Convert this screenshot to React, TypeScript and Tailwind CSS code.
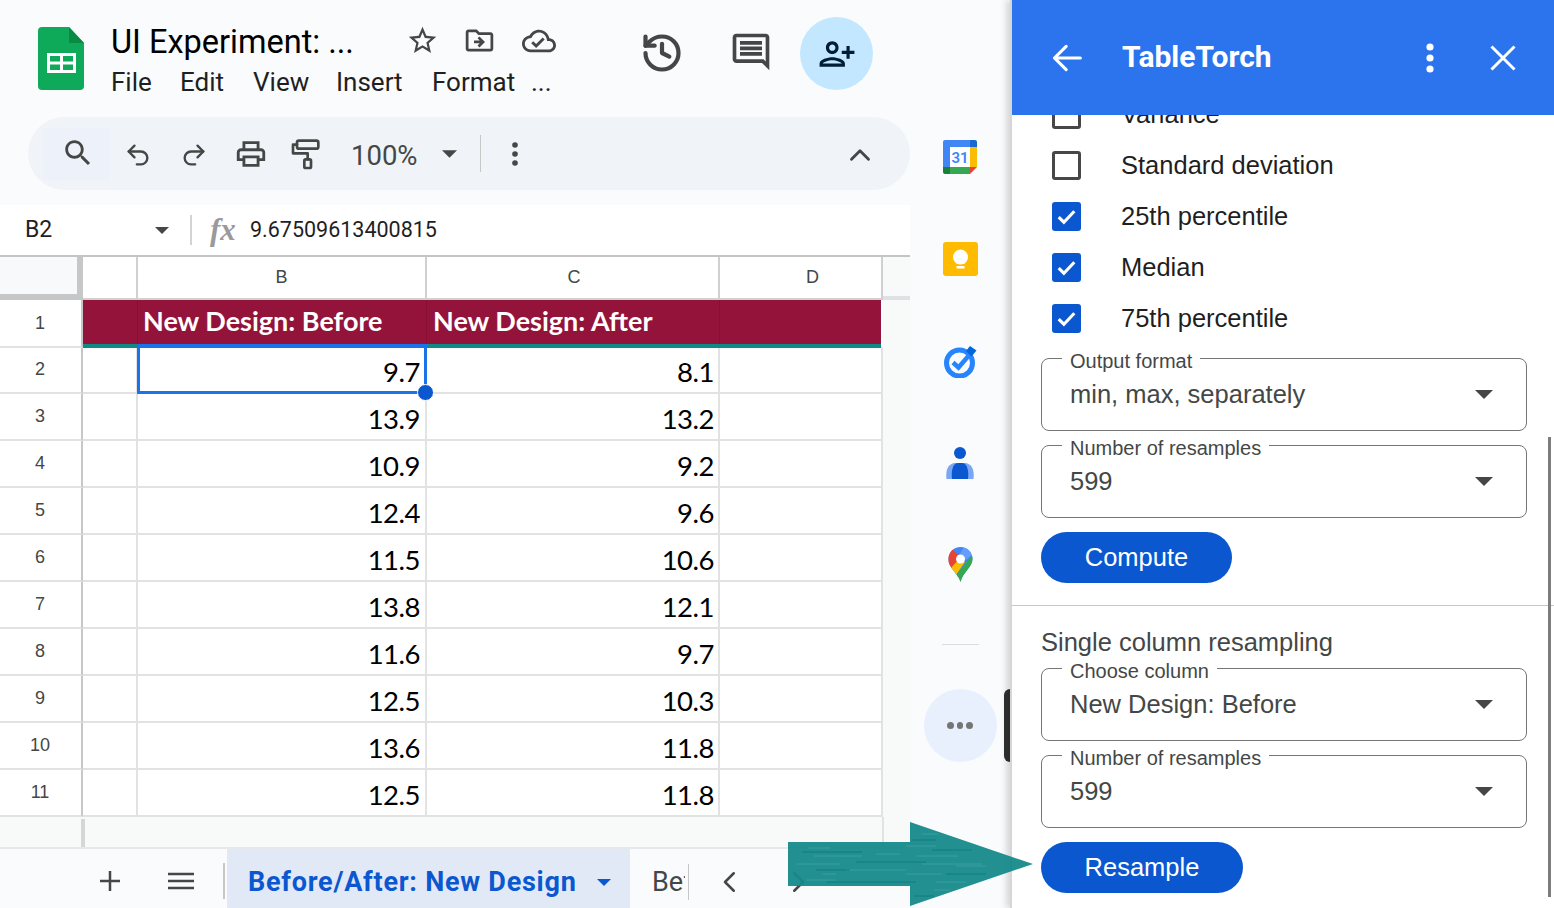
import React from "react";

const P = {
  star: "M22 9.24l-7.19-.62L12 2 9.19 8.63 2 9.24l5.46 4.73L5.82 21 12 17.27 18.18 21l-1.63-7.03L22 9.24zM12 15.4l-3.76 2.27 1-4.28-3.32-2.88 4.38-.38L12 6.1l1.71 4.04 4.38.38-3.32 2.88 1 4.28L12 15.4z",
  move: "M20 6h-8l-2-2H4c-1.11 0-1.99.89-1.99 2L2 18c0 1.11.89 2 2 2h16c1.11 0 2-.89 2-2V8c0-1.11-.89-2-2-2zm0 12H4V6h5.17l2 2H20v10zm-8.01-9l-1.41 1.41L12.16 12H8v2h4.16l-1.59 1.59L11.99 17 16 13.01 11.99 9z",
  cloud: "M19.35 10.04C18.67 6.59 15.64 4 12 4 9.11 4 6.6 5.64 5.35 8.04 2.34 8.36 0 10.91 0 14c0 3.31 2.69 6 6 6h13c2.76 0 5-2.24 5-5 0-2.64-2.05-4.78-4.65-4.96zM19 18H6c-2.21 0-4-1.79-4-4 0-2.05 1.53-3.76 3.56-3.97l1.07-.11.5-.95C8.08 7.14 9.94 6 12 6c2.62 0 4.88 1.86 5.39 4.43l.3 1.5 1.53.11c1.56.1 2.78 1.41 2.78 2.96 0 1.65-1.35 3-3 3zm-9-3.82l-2.09-2.09L6.5 13.5 10 17l6.01-6.01-1.41-1.41z",
  search: "M15.5 14h-.79l-.28-.27C15.41 12.59 16 11.11 16 9.5 16 5.91 13.09 3 9.5 3S3 5.91 3 9.5 5.91 16 9.5 16c1.61 0 3.09-.59 4.23-1.57l.27.28v.79l5 4.99L20.49 19l-4.99-5zm-6 0C7.01 14 5 11.99 5 9.5S7.01 5 9.5 5 14 7.01 14 9.5 11.99 14 9.5 14z",
  print: "M19 8h-1V3H6v5H5c-1.66 0-3 1.34-3 3v6h4v4h12v-4h4v-6c0-1.66-1.34-3-3-3zM8 5h8v3H8V5zm8 12v2H8v-4h8v2zm2-2v-2H6v2H4v-4c0-.55.45-1 1-1h14c.55 0 1 .45 1 1v4h-2z",
  comment: "M21.99 4c0-1.1-.89-2-1.99-2H4c-1.1 0-2 .9-2 2v12c0 1.1.9 2 2 2h14l4 4-.01-18zM20 4v13.17L18.83 16H4V4h16zM6 12h12v2H6zm0-3h12v2H6zm0-3h12v2H6z",
  person: "M15 12c2.21 0 4-1.79 4-4s-1.79-4-4-4-4 1.79-4 4 1.79 4 4 4zm0-6c1.1 0 2 .9 2 2s-.9 2-2 2-2-.9-2-2 .9-2 2-2zm0 8c-2.67 0-8 1.34-8 4v2h16v-2c0-2.66-5.33-4-8-4zm-6 4c.22-.72 3.31-2 6-2 2.7 0 5.8 1.29 6 2H9zm-3-3v-3h3v-2H6V7H4v3H1v2h3v3h2z",
};

function Fill({ d, className }: { d: string; className: string }) {
  return (
    <svg viewBox="0 0 24 24" fill="currentColor" className={className}>
      <path d={d} />
    </svg>
  );
}

function Stroke({ children, className, w = 2 }: { children: React.ReactNode; className: string; w?: number }) {
  return (
    <svg viewBox="0 0 24 24" fill="none" stroke="currentColor" strokeWidth={w} strokeLinecap="round" strokeLinejoin="round" className={className}>
      {children}
    </svg>
  );
}

function Caret({ className }: { className: string }) {
  return (
    <svg viewBox="0 0 18 9" fill="currentColor" className={className}>
      <path d="M0 0h18L9 9z" />
    </svg>
  );
}

function SheetsLogo() {
  return (
    <svg viewBox="0 0 46 63" className="w-[46px] h-[63px] ml-[38px] shrink-0">
      <path d="M4 0h27l15 16v43a4 4 0 0 1-4 4H4a4 4 0 0 1-4-4V4a4 4 0 0 1 4-4z" fill="#0fa95a" />
      <path d="M31 0l15 16H31z" fill="#0b8a43" />
      <path d="M9 26h29v20H9z" fill="#fff" />
      <path d="M12 29h10v5.500H12zM25 29h10v5.500H25zM12 37.500h10V43H12zM25 37.500h10V43H25z" fill="#0fa95a" />
    </svg>
  );
}

function Calendar() {
  return (
    <svg viewBox="0 0 34 34" className="w-[34px] h-[34px]">
      <path d="M2 0h25v7H7v20H0V2a2 2 0 0 1 2-2z" fill="#4285f4" />
      <path d="M27 0h5a2 2 0 0 1 2 2v5h-7z" fill="#1967d2" />
      <path d="M27 7h7v20h-7z" fill="#fbbc04" />
      <path d="M7 27h20v7H7z" fill="#34a853" />
      <path d="M0 27h7v7H2a2 2 0 0 1-2-2z" fill="#188038" />
      <path d="M27 27h7l-7 7z" fill="#ea4335" />
      <path d="M7 7h20v20H7z" fill="#fff" />
      <text x="17" y="23" textAnchor="middle" fontSize="15" fontWeight="600" fill="#4285f4" fontFamily="Roboto, sans-serif">31</text>
    </svg>
  );
}

function Keep() {
  return (
    <svg viewBox="0 0 35 34" className="w-[35px] h-[34px]">
      <rect width="35" height="34" rx="3" fill="#ffbb00" />
      <circle cx="17.500" cy="15" r="7.500" fill="#fff" />
      <path d="M13.500 19h8v3h-8z" fill="#fff" />
      <path d="M13.500 24h8v2.500h-8z" fill="#fff" />
    </svg>
  );
}

function Tasks() {
  return (
    <svg viewBox="0 0 33 33" className="w-[33px] h-[33px]">
      <circle cx="15.500" cy="18" r="13" fill="none" stroke="#2684fc" strokeWidth="5" />
      <path d="M9 17.500l5.500 5L27 8" fill="none" stroke="#2684fc" strokeWidth="4.500" />
      <path d="M22 6l4-5 6.500 4.500-5 6z" fill="#0066da" />
    </svg>
  );
}

function Contacts() {
  return (
    <svg viewBox="0 0 28 32" className="w-[28px] h-[32px]">
      <circle cx="14" cy="6" r="6" fill="#0b57d0" />
      <path d="M0.500 32c-1-8 1-15 8-16h11c7 1 9 8 8 16z" fill="#7aa7f5" />
      <path d="M6 32c-1-9 1-16 6-16h4c5 0 7 7 6 16z" fill="#0b57d0" />
    </svg>
  );
}

function Maps() {
  return (
    <svg viewBox="0 0 25 35" className="w-[25px] h-[35px]">
      <defs>
        <clipPath id="pin">
          <path d="M12.500 0C19.400 0 24.500 5.500 24.500 12 24.500 20 15 25 12.500 35 11.500 30 6 25 3 20 1 17.500.5 15 .5 12 .5 5.500 5.600 0 12.500 0z" />
        </clipPath>
      </defs>
      <g clipPath="url(#pin)">
        <path d="M0 0h25v36H0z" fill="#4285f4" />
        <path d="M16 0h9v7l-7 6-6-6z" fill="#669df6" />
        <path d="M0 3h5l9 8-10 11H0z" fill="#ea4335" />
        <path d="M3 21l9-10 5 4-9 13z" fill="#fbbc04" />
        <path d="M25 7L8 28l4 8h13z" fill="#34a853" />
      </g>
      <circle cx="12.500" cy="12" r="4.500" fill="#fff" />
    </svg>
  );
}

const rows: [string, string, string][] = [
  ["2", "9.7", "8.1"],
  ["3", "13.9", "13.2"],
  ["4", "10.9", "9.2"],
  ["5", "12.4", "9.6"],
  ["6", "11.5", "10.6"],
  ["7", "13.8", "12.1"],
  ["8", "11.6", "9.7"],
  ["9", "12.5", "10.3"],
  ["10", "13.6", "11.8"],
  ["11", "12.5", "11.8"],
];

function Row({ n, b, c, selected }: { n: string; b: string; c: string; selected?: boolean }) {
  return (
    <div className="grid grid-cols-[83px_55px_289px_293px_163px] h-[47px] bg-white font-[Lato,sans-serif] text-[27.500px] tracking-[-0.5px] text-black w-[883px]">
      <div className="flex items-center justify-center border-r-2 border-b-2 border-r-[#c7c7c7] border-b-[#e2e2e2] text-[18px] tracking-normal text-[#444746] font-['Liberation_Sans',sans-serif] pr-[1px]">{n}</div>
      <div className="border-r-2 border-b-2 border-[#e2e2e2]" />
      <div className="relative border-r-2 border-b-2 border-[#e2e2e2] flex items-end justify-end pr-[5px] pb-[3px] leading-[34px]">
        {b}
        {selected && (
          <>
            <div className="absolute z-[2] left-[-1px] right-[-2px] top-[-3px] bottom-[-2px] border-[3px] border-[#1a73e8]" />
            <div className="absolute z-[3] right-[-9px] bottom-[-9px] w-[17px] h-[17px] rounded-full bg-[#0b57d0] border border-white" />
          </>
        )}
      </div>
      <div className="border-r-2 border-b-2 border-[#e2e2e2] flex items-end justify-end pr-[4px] pb-[3px] leading-[34px]">{c}</div>
      <div className="border-r-2 border-b-2 border-[#e2e2e2]" />
    </div>
  );
}

function Check({ label, checked }: { label: string; checked?: boolean }) {
  return (
    <div className="flex items-center h-[51px] pl-[40px] text-[25.500px] text-[#1f1f1f]">
      {checked ? (
        <div className="w-[29px] h-[29px] rounded-[3px] bg-[#0b57d0] flex items-center justify-center shrink-0">
          <svg viewBox="0 0 24 24" fill="none" stroke="#fff" strokeWidth="3" className="w-[25px] h-[25px]">
            <path d="M4.500 12.500l5 5L19.500 7" />
          </svg>
        </div>
      ) : (
        <div className="w-[29px] h-[29px] rounded-[3px] border-[3px] border-[#474747] shrink-0" />
      )}
      <span className="ml-[40px]">{label}</span>
    </div>
  );
}

function Select({ label, value, className = "" }: { label: string; value: string; className?: string }) {
  return (
    <div className={`relative ml-[29px] w-[486px] h-[73px] border border-[#757575] rounded-[8px] flex items-center justify-between pl-[28px] pr-[33px] pb-[1px] ${className}`}>
      <span className="absolute top-[-8px] left-[20px] px-[8px] bg-white text-[20px] leading-[20px] text-[#444746]">{label}</span>
      <span className="text-[25.500px] text-[#444746] leading-[30px]">{value}</span>
      <Caret className="w-[18px] h-[9px] text-[#444746]" />
    </div>
  );
}

function Pill({ label, w, className = "" }: { label: string; w: string; className?: string }) {
  return (
    <button className={`ml-[29px] h-[51px] rounded-full bg-[#0b57d0] text-white text-[25.500px] block ${w} ${className}`}>{label}</button>
  );
}

export default function App() {
  return (
    <div className="relative flex w-[1554px] h-[908px] overflow-hidden bg-[#fafbfd] font-['Liberation_Sans',sans-serif]">
      <main className="w-[910px] h-[908px] flex flex-col shrink-0">
        <header className="h-[117px] flex items-start pt-[27px] shrink-0">
          <SheetsLogo />
          <div className="ml-[27px] w-[460px] shrink-0 font-['Roboto',sans-serif]">
            <div className="flex items-center h-[30px]">
              <span className="text-[32.500px] text-black w-[290px] shrink-0 whitespace-nowrap leading-[30px]">UI Experiment: ...</span>
              <Fill d={P.star} className="w-[33px] h-[33px] shrink-0 text-[#444746] ml-[5px] mt-[-3px]" />
              <Fill d={P.move} className="w-[33px] h-[33px] shrink-0 text-[#444746] ml-[24px] mt-[-3px]" />
              <Fill d={P.cloud} className="w-[34px] h-[34px] shrink-0 text-[#444746] ml-[26px] mt-[-3px]" />
            </div>
            <div className="flex items-center mt-[10px] text-[26px] leading-[30px] text-[#1f1f1f]">
              <span className="w-[69px]">File</span>
              <span className="w-[73px]">Edit</span>
              <span className="w-[83px]">View</span>
              <span className="w-[96px]">Insert</span>
              <span className="w-[99px]">Format</span>
              <span>...</span>
            </div>
          </div>
          <Stroke className="w-[44px] h-[44px] shrink-0 text-[#444746] ml-[69px] mt-[4px]" w={2.300}>
            <path d="M3 12a9 9 0 1 0 9-9 9.750 9.750 0 0 0-6.740 2.740L3 8" />
            <path d="M3 3v5h5" />
            <path d="M12 7v5l4 2" />
          </Stroke>
          <Fill d={P.comment} className="w-[44px] h-[44px] shrink-0 text-[#444746] ml-[45px] mt-[3px]" />
          <div className="w-[73px] h-[73px] shrink-0 rounded-full bg-[#c2e7ff] flex items-center justify-center ml-[27px] mt-[-10px]">
            <Fill d={P.person} className="w-[38px] h-[38px] text-[#001d35] -scale-x-100" />
          </div>
          <div className="w-[58px] h-[58px] shrink-0 rounded-full bg-[#8d6e63] flex items-center justify-center ml-[44px] mt-[-3px] text-white text-[31px] font-['Roboto',sans-serif]">A</div>
        </header>

        <div className="h-[88px] pl-[28px] shrink-0">
          <div className="h-[73px] rounded-l-[37px] rounded-r-[37px] bg-[#f0f3f8] flex items-center text-[#444746]">
            <div className="ml-[15px] w-[67px] h-[52px] bg-[#edf2fa] flex items-center justify-center pb-[2px] pl-[2px]">
              <Fill d={P.search} className="w-[34px] h-[34px]" />
            </div>
            <Stroke className="w-[28px] h-[28px] ml-[14px] mt-[2px]">
              <path d="M9 14 4 9l5-5" />
              <path d="M4 9h10.500a5.500 5.500 0 0 1 0 11H11" />
            </Stroke>
            <Stroke className="w-[28px] h-[28px] ml-[28px] mt-[2px]">
              <path d="m15 14 5-5-5-5" />
              <path d="M20 9H9.500a5.500 5.500 0 0 0 0 11H13" />
            </Stroke>
            <Fill d={P.print} className="w-[34px] h-[34px] ml-[26px] mt-[1px]" />
            <Stroke className="w-[32px] h-[34px] ml-[21px] mt-[1px]">
              <rect x="6" y="2" width="16" height="6" rx="1.500" />
              <path d="M6 5H3v6.500h11V16" />
              <rect x="11.500" y="16" width="5" height="6.500" rx="1" />
            </Stroke>
            <span className="ml-[30px] text-[27.500px] font-['Roboto',sans-serif] w-[90px] mt-[4px]">100%</span>
            <Caret className="w-[15px] h-[8px] ml-[1px]" />
            <div className="w-px h-[37px] bg-[#c7c7c7] ml-[23px]" />
            <svg viewBox="0 0 6 24" className="w-[6px] h-[24px] ml-[31px]" fill="currentColor">
              <circle cx="3" cy="3" r="2.800" />
              <circle cx="3" cy="12" r="2.800" />
              <circle cx="3" cy="21" r="2.800" />
            </svg>
            <Stroke className="w-[34px] h-[34px] ml-[325px] mt-[2px]">
              <path d="M6 15l6-6 6 6" />
            </Stroke>
          </div>
        </div>

        <div className="h-[50px] bg-white flex items-center shrink-0 text-[#1f1f1f]">
          <span className="ml-[25px] w-[130px] text-[23px] font-['Roboto',sans-serif]">B2</span>
          <Caret className="w-[14px] h-[7px] text-[#444746]" />
          <div className="w-[2px] h-[30px] bg-[#d4d4d4] ml-[21px]" />
          <span className="ml-[18px] w-[40px] text-[31px] italic font-['Liberation_Serif',serif] text-[#9a9a9a] font-bold leading-[30px]">fx</span>
          <span className="text-[21.500px] font-['Roboto',sans-serif] text-[#1f1f1f]">9.67509613400815</span>
        </div>

        <div className="flex-1 flex flex-col bg-[#f8f9f9] border-t-2 border-[#c4c4c4] min-h-0">
          <div className="h-[43px] flex shrink-0">
            <div className="grid grid-cols-[83px_55px_289px_293px_163px] w-[883px] bg-white text-[18px] text-[#444746]">
              <div className="bg-[#f8f9fa] border-r-[6px] border-b-[6px] border-[#c7c7c7]" />
              <div className="border-r-2 border-b-2 border-[#d0d0d0]" />
              <div className="border-r-2 border-b-2 border-[#d0d0d0] flex items-center justify-center">B</div>
              <div className="border-r-2 border-b-2 border-[#d0d0d0] flex items-center justify-center pl-[3px]">C</div>
              <div className="border-r-2 border-b-2 border-[#d0d0d0] flex items-center justify-center pl-[24px]">D</div>
            </div>
            <div className="flex-1 border-b-[4px] border-[#dfe1e5]" />
          </div>
          <div className="relative z-[1] grid grid-cols-[83px_55px_289px_293px_163px] h-[47px] w-[883px] bg-white shrink-0 font-[Lato,sans-serif]">
            <div className="flex items-center justify-center border-r-2 border-b-2 border-r-[#c7c7c7] border-b-[#e2e2e2] text-[18px] text-[#444746] font-['Liberation_Sans',sans-serif] pr-[1px]">1</div>
            <div className="col-span-4 h-[48px] w-[798px] bg-[#93133a] border-b-[4px] border-[#0f8a85] grid grid-cols-[55px_289px_293px_161px] text-white text-[27px] font-bold items-center">
              <div className="h-full border-r border-[#860f33]" />
              <div className="h-full border-r border-[#860f33] pl-[5px] leading-[42px]">New Design: Before</div>
              <div className="h-full border-r border-[#860f33] pl-[6px] leading-[42px] whitespace-nowrap">New Design: After</div>
              <div />
            </div>
          </div>
          {rows.map(([n, b, c], i) => (
            <Row key={n} n={n} b={b} c={c} selected={i === 0} />
          ))}
          <div className="flex-1 flex w-[884px] border-r-2 border-[#e2e2e2] pt-[2px]">
            <div className="ml-[81px] w-[4px] bg-[#d6d6d6]" />
          </div>
        </div>

        <footer className="h-[61px] border-t-2 border-[#e6e8eb] bg-[#fafbfd] flex items-center shrink-0 text-[#444746]">
          <svg viewBox="0 0 20 20" className="w-[20px] h-[20px] ml-[100px] mt-[4px]" fill="none" stroke="currentColor" strokeWidth="2.500">
            <path d="M10 0v20M0 10h20" />
          </svg>
          <svg viewBox="0 0 26 18" className="w-[26px] h-[18px] ml-[48px] mt-[4px]" fill="none" stroke="currentColor" strokeWidth="2.500">
            <path d="M0 2h26M0 9h26M0 16h26" />
          </svg>
          <div className="w-[2px] h-[36px] bg-[#c7c7c7] ml-[29px] mt-[4px]" />
          <div className="ml-[2px] w-[403px] h-full bg-[#e1e9f7] flex items-center pl-[21px] pt-[7px] text-[#0b57d0] text-[27px] font-bold font-['Roboto',sans-serif] tracking-[0.75px]">
            <span className="whitespace-nowrap">Before/After: New Design</span>
            <Caret className="w-[14px] h-[7px] ml-[20px]" />
          </div>
          <div className="ml-[22px] h-[36px] w-[37px] border-r border-[#c7c7c7] mt-[6px]">
            <div className="w-[33px] overflow-hidden text-[27px] font-['Roboto',sans-serif] leading-[36px] whitespace-nowrap">Before</div>
          </div>
          <Stroke className="w-[30px] h-[30px] ml-[26px] mt-[6px]" w={2}>
            <path d="M15 5l-7 7 7 7" />
          </Stroke>
          <Stroke className="w-[30px] h-[30px] ml-[38px] mt-[6px]" w={2}>
            <path d="M9 5l7 7-7 7" />
          </Stroke>
        </footer>
      </main>

      <aside className="w-[100px] h-[908px] shrink-0 flex flex-col items-center pt-[140px] bg-[#f9fbfd] relative">
        <div className="h-[102px]"><Calendar /></div>
        <div className="h-[103px]"><Keep /></div>
        <div className="h-[102px]"><Tasks /></div>
        <div className="h-[100px]"><Contacts /></div>
        <div className="h-[97px]"><Maps /></div>
        <div className="w-[37px] h-px bg-[#dadce0]" />
        <div className="mt-[44px] w-[73px] h-[73px] rounded-full bg-[#e8f0fe] flex items-center justify-center gap-[3px] ">
          <span className="w-[6.500px] h-[6.500px] rounded-full bg-[#757575]" />
          <span className="w-[6.500px] h-[6.500px] rounded-full bg-[#757575]" />
          <span className="w-[6.500px] h-[6.500px] rounded-full bg-[#757575]" />
        </div>
        <div className="absolute right-0 top-[689px] w-[6px] h-[73px] rounded-l-[6px] bg-[#303030]" />
      </aside>

      <section className="relative w-[544px] h-[908px] shrink-0 flex flex-col border-l-2 border-[#d6d6d6] bg-white shadow-[-4px_0_6px_rgba(0,0,0,0.14)]">
        <div className="relative z-10 h-[115px] shrink-0 bg-[#2b74ee] flex items-center text-white">
          <Stroke className="w-[40px] h-[40px] ml-[35px]" w={1.900}>
            <path d="M20 12H4.500M11.500 5l-7 7 7 7" />
          </Stroke>
          <span className="ml-[35px] w-[304px] text-[30px] font-bold font-['Roboto',sans-serif] leading-none mb-[2px]">TableTorch</span>
          <svg viewBox="0 0 8 30" className="w-[8px] h-[30px]" fill="currentColor">
            <circle cx="4" cy="4" r="3.600" />
            <circle cx="4" cy="15" r="3.600" />
            <circle cx="4" cy="26" r="3.600" />
          </svg>
          <svg viewBox="0 0 26 26" className="w-[26px] h-[26px] ml-[56px]" fill="none" stroke="currentColor" strokeWidth="3">
            <path d="M1.500 1.500l23 23M24.500 1.500l-23 23" />
          </svg>
        </div>
        <div className="flex-1 overflow-hidden min-h-0">
          <div className="mt-[-26px]">
            <Check label="Variance" />
            <Check label="Standard deviation" />
            <Check label="25th percentile" checked />
            <Check label="Median" checked />
            <Check label="75th percentile" checked />
            <Select label="Output format" value="min, max, separately" className="mt-[14px]" />
            <Select label="Number of resamples" value="599" className="mt-[14px]" />
            <Pill label="Compute" w="w-[191px]" className="mt-[14px]" />
            <div className="h-px bg-[#c7c7c7] mt-[22px]" />
            <div className="ml-[29px] mt-[22px] text-[25.500px] leading-[28px] text-[#444746]">Single column resampling</div>
            <Select label="Choose column" value="New Design: Before" className="mt-[12px]" />
            <Select label="Number of resamples" value="599" className="mt-[14px]" />
            <Pill label="Resample" w="w-[202px]" className="mt-[14px]" />
          </div>
        </div>
        <div className="absolute left-[536px] top-[437px] w-[3px] h-[460px] bg-[#7d7d7d]" />
      </section>

      <svg viewBox="0 0 250 88" className="absolute left-[786px] top-[820px] w-[250px] h-[88px] z-20">
        <path d="M2 22h122V2l123 42L124 86V66H2z" fill="#168a8a" fillOpacity="0.95" />
        <g stroke="#3ea3a2" strokeWidth="1" opacity="0.8">
          <path d="M22 28h22M28 36h48M10 44h44M60 50h60M120 26h30M130 36h42M136 44h60M120 54h36M150 62h30M20 60h30M90 34h24M170 46h30M36 54h14M136 14h16M148 70h16" />
        </g>
        <g stroke="#0f7d7e" strokeWidth="1.200" opacity="0.9">
          <path d="M16 32h60M70 42h70M30 50h34M126 20h24M146 30h40M160 54h40M40 62h90M128 76h20" />
        </g>
      </svg>
    </div>
  );
}
